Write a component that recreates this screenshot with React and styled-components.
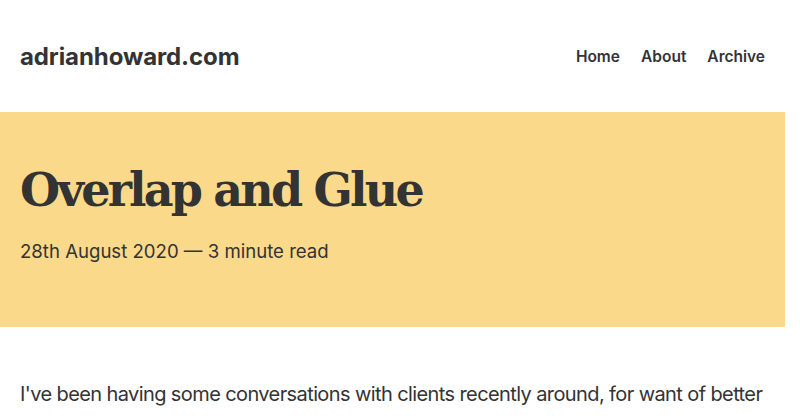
import React from "react";
import styled, { createGlobalStyle } from "styled-components";

const GlobalStyle = createGlobalStyle`
  html, body {
    margin: 0;
    padding: 0;
    background: #fff;
    overflow: hidden;
  }
  body {
    font-family: Inter, "Noto Sans", sans-serif;
    color: #333;
  }
`;

const Page = styled.div`
  width: 785px;
`;

const Header = styled.header`
  height: 112px;
  display: flex;
  align-items: center;
  justify-content: space-between;
  padding: 0 20px;
  box-sizing: border-box;
`;

const Logo = styled.a`
  font-size: 24px;
  font-weight: 700;
  color: #333;
  text-decoration: none;
  letter-spacing: -0.1px;
`;

const Nav = styled.nav`
  display: flex;
  gap: 21px;
`;

const NavLink = styled.a`
  font-size: 15.5px;
  font-weight: 600;
  color: #333;
  text-decoration: none;
`;

const Hero = styled.section`
  background: #fbd98a;
  height: 215px;
  padding: 52px 20px 0;
  box-sizing: border-box;
`;

const Title = styled.h1`
  margin: 0;
  font-family: "DejaVu Serif", "Liberation Serif", serif;
  font-weight: 700;
  font-size: 46px;
  line-height: 52px;
  letter-spacing: -2.8px;
`;

const Meta = styled.p`
  margin: 23px 0 0;
  font-size: 18.6px;
  line-height: 24px;
`;

const Article = styled.article`
  padding: 52px 20px 0;
`;

const Para = styled.p`
  margin: 0;
  font-size: 20px;
  line-height: 30px;
  letter-spacing: -0.6px;
`;

export default function App() {
  const links = ["Home", "About", "Archive"];
  return (
    <Page>
      <GlobalStyle />
      <Header>
        <Logo href="#">adrianhoward.com</Logo>
        <Nav>
          {links.map(l => (
            <NavLink key={l} href="#">
              {l}
            </NavLink>
          ))}
        </Nav>
      </Header>
      <Hero>
        <Title>Overlap and Glue</Title>
        <Meta>28th August 2020 — 3 minute read</Meta>
      </Hero>
      <Article>
        <Para>
          I've been having some conversations with clients recently around, for
          want of better
        </Para>
      </Article>
    </Page>
  );
}
